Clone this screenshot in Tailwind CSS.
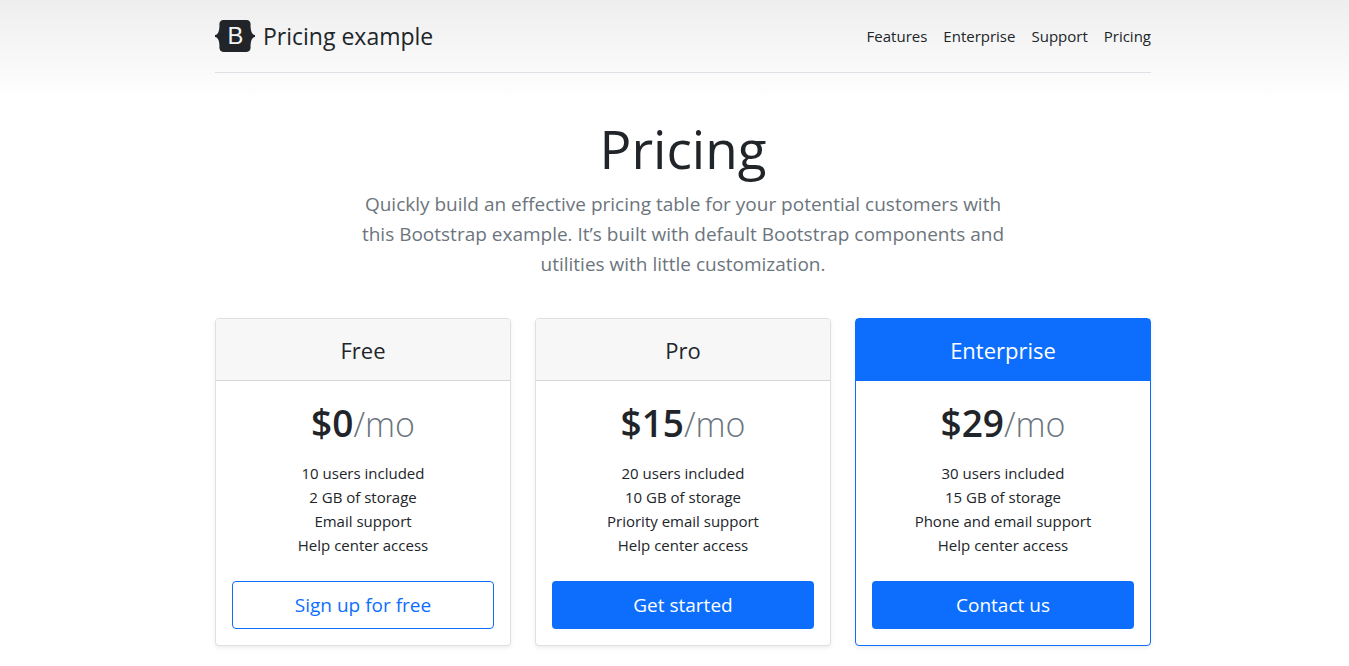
<!DOCTYPE html>
<html lang="en">
<head>
<meta charset="utf-8">
<meta name="viewport" content="width=device-width, initial-scale=1">
<title>Pricing example</title>
<script src="https://cdn.jsdelivr.net/npm/@tailwindcss/browser@4"></script>
</head>
<body class="min-h-screen overflow-x-hidden bg-white bg-[linear-gradient(180deg,#eeeeee,#ffffff_100px)] bg-no-repeat pl-[17px] font-['Segoe_UI','Open_Sans',sans-serif] text-[15px] leading-6 text-[#212529]">
<div class="mx-auto max-w-[936px] pt-4">
  <header>
    <div class="mb-10 flex items-center justify-between border-b border-[#dee2e6] pb-4">
      <a href="#" class="flex h-10 items-center gap-2 text-[23px]">
        <svg class="h-8 w-10" viewBox="0 0 118 94" role="img" aria-label="Bootstrap">
          <path fill="#212529" d="M24.509 0c-6.733 0-11.715 5.893-11.492 12.284.214 6.14-.064 14.092-2.066 20.577C8.943 39.365 5.547 43.485 0 44.014v5.972c5.547.529 8.943 4.649 10.951 11.153 2.002 6.485 2.28 14.437 2.066 20.577C12.794 88.106 17.776 94 24.51 94H93.5c6.733 0 11.714-5.893 11.491-12.284-.214-6.14.064-14.092 2.066-20.577 2.009-6.504 5.396-10.624 10.943-11.153v-5.972c-5.547-.529-8.934-4.649-10.943-11.153-2.002-6.484-2.28-14.437-2.066-20.577C105.214 5.894 100.233 0 93.5 0H24.508z"/>
          <text x="60" y="72" text-anchor="middle" fill="#f5f5f5" font-family="Liberation Sans, sans-serif" font-size="70">B</text>
        </svg>
        <span>Pricing example</span>
      </a>
      <nav class="flex gap-4">
        <a href="#">Features</a>
        <a href="#">Enterprise</a>
        <a href="#">Support</a>
        <a href="#">Pricing</a>
      </nav>
    </div>
    <div class="mx-auto mb-[39px] max-w-[668px] text-center">
      <h1 class="mb-2 pt-1 text-[53px] leading-[64px]">Pricing</h1>
      <p class="text-[19px] leading-[30px] text-[#6c757d]">Quickly build an effective pricing table for your potential customers with this Bootstrap example. It’s built with default Bootstrap components and utilities with little customization.</p>
    </div>
  </header>

  <main class="mb-4 grid grid-cols-3 gap-6 text-center">
    <section class="rounded border border-[#dfdfdf] bg-white shadow-[0_2px_4px_rgba(0,0,0,0.075)]">
      <h2 class="rounded-t-[3px] border-b border-[#d5d5d5] bg-[#f7f7f7] pt-[17px] pb-[15px] text-[22px] leading-[29px]">Free</h2>
      <div class="p-4">
        <p class="text-[37px] leading-[52px] font-semibold">$0<small class="text-[34px] leading-none font-light text-[#6c757d]">/mo</small></p>
        <ul class="mt-3 mb-6">
          <li>10 users included</li>
          <li>2 GB of storage</li>
          <li>Email support</li>
          <li>Help center access</li>
        </ul>
        <button type="button" class="h-12 w-full rounded border border-[#0d6efd] text-[19px] text-[#0d6efd]">Sign up for free</button>
      </div>
    </section>
    <section class="rounded border border-[#dfdfdf] bg-white shadow-[0_2px_4px_rgba(0,0,0,0.075)]">
      <h2 class="rounded-t-[3px] border-b border-[#d5d5d5] bg-[#f7f7f7] pt-[17px] pb-[15px] text-[22px] leading-[29px]">Pro</h2>
      <div class="p-4">
        <p class="text-[37px] leading-[52px] font-semibold">$15<small class="text-[34px] leading-none font-light text-[#6c757d]">/mo</small></p>
        <ul class="mt-3 mb-6">
          <li>20 users included</li>
          <li>10 GB of storage</li>
          <li>Priority email support</li>
          <li>Help center access</li>
        </ul>
        <button type="button" class="h-12 w-full rounded bg-[#0d6efd] text-[19px] text-white">Get started</button>
      </div>
    </section>
    <section class="rounded border border-[#0d6efd] bg-white shadow-[0_2px_4px_rgba(0,0,0,0.075)]">
      <h2 class="border-b border-[#0d6efd] bg-[#0d6efd] pt-[17px] pb-[15px] text-[22px] leading-[29px] text-white">Enterprise</h2>
      <div class="p-4">
        <p class="text-[37px] leading-[52px] font-semibold">$29<small class="text-[34px] leading-none font-light text-[#6c757d]">/mo</small></p>
        <ul class="mt-3 mb-6">
          <li>30 users included</li>
          <li>15 GB of storage</li>
          <li>Phone and email support</li>
          <li>Help center access</li>
        </ul>
        <button type="button" class="h-12 w-full rounded bg-[#0d6efd] text-[19px] text-white">Contact us</button>
      </div>
    </section>
  </main>
</div>
</body>
</html>
